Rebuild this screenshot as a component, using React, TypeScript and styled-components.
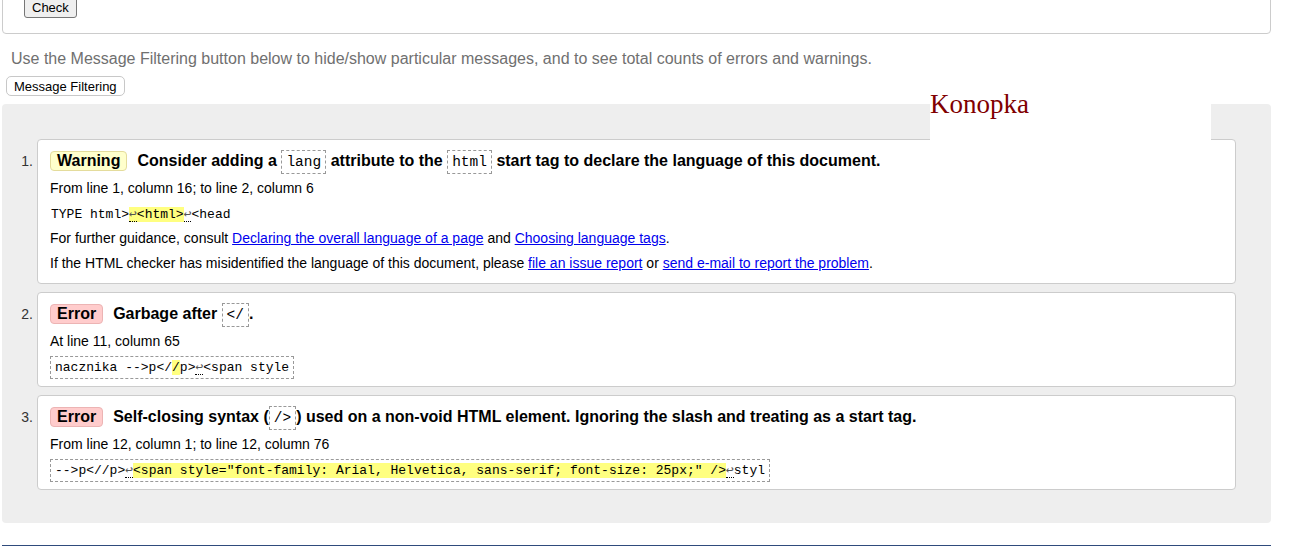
import React from 'react';
import styled, { createGlobalStyle } from 'styled-components';

const GlobalStyle = createGlobalStyle`
  body {
    margin: 0;
    background: #fff;
    font-family: "Liberation Sans", Arial, sans-serif;
    color: #000;
    overflow: hidden;
  }
`;

type Kind = 'warning' | 'error';

type Message = {
  kind: Kind;
  heading: React.ReactNode;
  location: string;
  extract: React.ReactNode;
  boxed: boolean;
  notes?: React.ReactNode[];
};

export default function App() {
  const messages = getMessages();
  return <Page>
    <GlobalStyle />
    <FormBox>
      <PlainButton>Check</PlainButton>
    </FormBox>
    <Intro>Use the Message Filtering button below to hide/show particular messages, and to see total counts of errors and warnings.</Intro>
    <FilterButton>Message Filtering</FilterButton>
    <Results>
      <Stamp>Konopka</Stamp>
      <MessageList>
        {messages.map((m, i) => (
          <Item key={i}>
            <Number>{i + 1}.</Number>
            <Card>
              <Heading>
                <Badge $kind={m.kind}>{m.kind === 'warning' ? 'Warning' : 'Error'}</Badge>
                {m.heading}
              </Heading>
              <Line>{m.location}</Line>
              <Line><Extract $boxed={m.boxed}>{m.extract}</Extract></Line>
              {m.notes?.map((n, j) => <Line key={j}>{n}</Line>)}
            </Card>
          </Item>
        ))}
      </MessageList>
    </Results>
    <Footer />
  </Page>;
}

function getMessages(): Message[] {
  return [
    {
      kind: 'warning',
      heading: <>Consider adding a <Code>lang</Code> attribute to the <Code>html</Code> start tag to declare the language of this document.</>,
      location: 'From line 1, column 16; to line 2, column 6',
      extract: <>TYPE html&gt;<Mark><Lf>↩</Lf>&lt;html&gt;</Mark><Lf>↩</Lf>&lt;head</>,
      boxed: false,
      notes: [
        <>For further guidance, consult <Link href="#">Declaring the overall language of a page</Link> and <Link href="#">Choosing language tags</Link>.</>,
        <>If the HTML checker has misidentified the language of this document, please <Link href="#">file an issue report</Link> or <Link href="#">send e-mail to report the problem</Link>.</>,
      ],
    },
    {
      kind: 'error',
      heading: <>Garbage after <Code>&lt;/</Code>.</>,
      location: 'At line 11, column 65',
      extract: <>nacznika --&gt;p&lt;/<Mark>/</Mark>p&gt;<Lf>↩</Lf>&lt;span style</>,
      boxed: true,
    },
    {
      kind: 'error',
      heading: <>Self-closing syntax (<Code>/&gt;</Code>) used on a non-void HTML element. Ignoring the slash and treating as a start tag.</>,
      location: 'From line 12, column 1; to line 12, column 76',
      extract: <>--&gt;p&lt;//p&gt;<Lf>↩</Lf><Mark>&lt;span style="font-family: Arial, Helvetica, sans-serif; font-size: 25px;" /&gt;</Mark><Lf>↩</Lf>styl</>,
      boxed: true,
    },
  ];
}

const Page = styled.div`
  padding: 0 21px 0 2px;
`;

const FormBox = styled.div`
  margin-top: -10px;
  padding: 6px 0 15px 21px;
  border: 1px solid #ccc;
  border-radius: 4px;
`;

const PlainButton = styled.button`
  height: 21px;
  padding: 0 7px;
  font-family: "Liberation Sans", Arial, sans-serif;
  font-size: 13px;
  background: #efefef;
  border: 1px solid #767676;
  border-radius: 3px;
  color: #000;
`;

const Intro = styled.p`
  margin: 16px 0 0 9px;
  font-size: 16px;
  line-height: 18px;
  color: #707070;
`;

const FilterButton = styled.button`
  display: block;
  margin: 8px 0 0 4px;
  height: 20px;
  padding: 0 7px;
  font-family: "Liberation Sans", Arial, sans-serif;
  font-size: 13px;
  background: #fff;
  border: 1px solid #c8c8c8;
  border-radius: 5px;
  color: #000;
`;

const Results = styled.div`
  position: relative;
  margin-top: 8px;
  padding: 35px 35px 33px 0;
  background: #eee;
  border-radius: 4px;
`;

const Stamp = styled.div`
  position: absolute;
  top: -16px;
  left: 928px;
  width: 281px;
  height: 52px;
  padding-top: 1px;
  box-sizing: border-box;
  background: #fff;
  z-index: 1;
  font-family: "Liberation Serif", "Times New Roman", serif;
  font-size: 27px;
  color: #800000;
`;

const MessageList = styled.ol`
  display: flex;
  flex-direction: column;
  gap: 8px;
  margin: 0;
  padding: 0;
  list-style: none;
`;

const Item = styled.li`
  display: grid;
  grid-template-columns: 35px 1fr;
`;

const Number = styled.span`
  padding: 9px 4px 0 0;
  text-align: right;
  font-size: 14px;
  line-height: 26px;
  color: #333;
`;

const Card = styled.div`
  padding: 8px 12px 7px 12px;
  background: #fff;
  border: 1px solid #ccc;
  border-radius: 4px;
`;

const Heading = styled.div`
  margin-bottom: 2px;
  font-size: 16px;
  font-weight: bold;
  line-height: 26px;
`;

const Badge = styled.span<{ $kind: Kind }>`
  display: inline-block;
  margin-right: 10px;
  padding: 0 6px;
  line-height: 18px;
  border-radius: 4px;
  border: 1px solid ${p => (p.$kind === 'warning' ? '#e4dc9c' : '#ecb4b4')};
  background: ${p => (p.$kind === 'warning' ? '#ffffcc' : '#fcc')};
`;

const Code = styled.code`
  display: inline-block;
  padding: 2px 4px;
  font-family: "Liberation Mono", "DejaVu Sans Mono", monospace;
  font-size: 14.5px;
  font-weight: normal;
  line-height: 18px;
  border: 1px dashed #999;
  vertical-align: middle;
`;

const Line = styled.p`
  margin: 0;
  font-size: 14px;
  line-height: 25px;
`;

const Extract = styled.code<{ $boxed: boolean }>`
  display: inline-block;
  padding: ${p => (p.$boxed ? '2px 4px' : '2px 0')};
  font-family: "Liberation Mono", "DejaVu Sans Mono", monospace;
  font-size: 13px;
  line-height: 16px;
  white-space: pre;
  border: 1px dashed ${p => (p.$boxed ? '#999' : 'transparent')};
  vertical-align: middle;
`;

const Mark = styled.mark`
  background: #ffff80;
  color: inherit;
`;

const Lf = styled.span`
  font-family: "DejaVu Sans Mono", monospace;
  color: #555;
  border-bottom: 1px dotted #000;
`;

const Link = styled.a`
  color: #0000ee;
  text-decoration: underline;
`;

const Footer = styled.div`
  margin-top: 22px;
  height: 4px;
  border-top: 1px solid #2f4b7c;
`;
